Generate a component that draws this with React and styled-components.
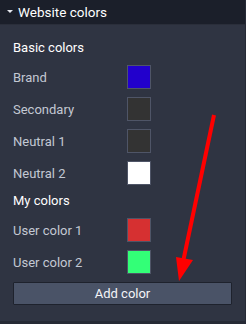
import React from "react";
import styled, { createGlobalStyle } from "styled-components";

const Global = createGlobalStyle`
  html, body { margin: 0; padding: 0; background: #2f3442; }
  body { font-family: Roboto, "Liberation Sans", Arial, sans-serif; width: 246px; height: 324px; overflow: hidden; }
`;

const Frame = styled.div`
  position: relative;
  width: 246px;
  height: 324px;
  display: flex;
  flex-direction: column;
  background: #2f3442;
  border-right: 1px solid #262a36;
  box-sizing: border-box;
`;

const Header = styled.div`
  height: 25px;
  display: flex;
  align-items: center;
  gap: 5px;
  padding-left: 7px;
  background: #1b1f2a;
  border-bottom: 1px solid #2a2e3a;
  box-sizing: border-box;
  color: #ffffff;
  font-size: 13.5px;
  font-weight: 400;
`;

const Caret = styled.span`
  width: 0;
  height: 0;
  border-left: 3px solid transparent;
  border-right: 3px solid transparent;
  border-top: 3px solid #e6e8ee;
  margin-top: -2px;
`;

const Body = styled.div`
  flex: 1;
  padding: 15px 13px 0 13px;
  display: flex;
  flex-direction: column;
`;

const Heading = styled.div`
  color: #ffffff;
  font-size: 13px;
  font-weight: 400;
  height: 16px;
  line-height: 16px;
  margin-top: ${(p) => p.$mt || 0}px;
  margin-bottom: ${(p) => p.$mb || 0}px;
`;

const Row = styled.div`
  display: grid;
  grid-template-columns: 114px 24px;
  align-items: center;
  height: 24px;
  margin-bottom: 8px;
`;

const Label = styled.span`
  color: #c3c8d3;
  font-size: 13px;
`;

const Swatch = styled.div`
  width: 24px;
  height: 24px;
  box-sizing: border-box;
  border: 1px solid #4f5567;
  background: ${(p) => p.$c};
`;

const Button = styled.button`
  margin-top: 0;
  width: 219px;
  height: 23px;
  box-sizing: border-box;
  background: #4a5367;
  border: 1px solid #1e222d;
  border-radius: 1px;
  color: #f4f5f8;
  font-family: inherit;
  font-size: 13px;
  font-weight: 400;
  padding: 0;
`;

const Footer = styled.div`
  height: 3px;
  background: #262a35;
`;

const Arrow = styled.svg`
  position: absolute;
  left: 0;
  top: 0;
  pointer-events: none;
`;

const basic = [
  ["Brand", "#2200cc"],
  ["Secondary", "#333333"],
  ["Neutral 1", "#333333"],
  ["Neutral 2", "#ffffff"],
];
const mine = [
  ["User color 1", "#d63031"],
  ["User color 2", "#33ff77"],
];

export default function App() {
  return (
    <>
      <Global />
      <Frame>
        <Header>
          <Caret />
          Website colors
        </Header>
        <Body>
          <Heading $mb={9}>Basic colors</Heading>
          {basic.map(([n, c]) => (
            <Row key={n}>
              <Label>{n}</Label>
              <Swatch $c={c} />
            </Row>
          ))}
          <Heading $mt={0} $mb={9}>My colors</Heading>
          {mine.map(([n, c]) => (
            <Row key={n}>
              <Label>{n}</Label>
              <Swatch $c={c} />
            </Row>
          ))}
          <Button>Add color</Button>
        </Body>
        <Footer />
        <Arrow width="246" height="324" viewBox="0 0 246 324">
          <line x1="214" y1="115" x2="183" y2="262" stroke="#ff0000" strokeWidth="4" />
          <polygon points="176,257 193,260 179,281" fill="#ff0000" />
        </Arrow>
      </Frame>
    </>
  );
}
